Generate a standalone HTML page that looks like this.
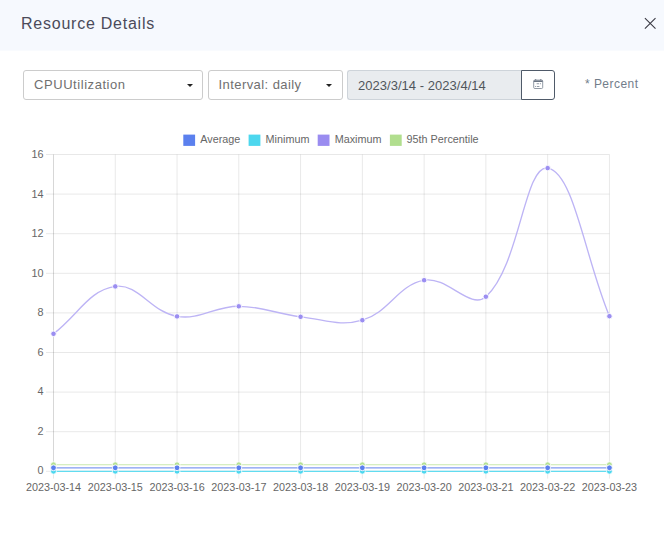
<!DOCTYPE html>
<html><head><meta charset="utf-8"><title>Resource Details</title>
<style>
html,body{margin:0;padding:0;background:#fff;}
body{width:664px;height:537px;position:relative;overflow:hidden;font-family:"Liberation Sans",Arial,sans-serif;}
.hdr{position:absolute;left:0;top:0;width:664px;height:50px;background:#f6f9fe;border-bottom:1px solid #f9fbfe;}
.title{position:absolute;left:21px;top:14px;font-size:16px;line-height:20px;color:#4b4b5a;letter-spacing:0.76px;white-space:nowrap;}
.close{position:absolute;left:640px;top:13px;width:20px;height:20px;}
.sel{position:absolute;top:70px;height:30px;box-sizing:border-box;border:1px solid #ccc;border-radius:3px;background:#fff;color:#707070;font-size:13px;line-height:28px;padding-left:10px;white-space:nowrap;letter-spacing:0.3px;}
.sel i{position:absolute;top:13px;width:0;height:0;border-left:3.5px solid transparent;border-right:3.5px solid transparent;border-top:3.5px solid #222;}
.date{position:absolute;left:347px;top:70px;width:175px;height:30px;box-sizing:border-box;border:1px solid #ced4da;border-right:none;border-radius:3px 0 0 3px;background:#e9ecef;color:#50565c;font-size:13px;line-height:30px;padding-left:10px;white-space:nowrap;letter-spacing:0.03px;}
.btn{position:absolute;left:521px;top:70px;width:34px;height:30px;box-sizing:border-box;border:1px solid #4f5a69;border-radius:0 3px 3px 0;background:#fff;}
.btn svg{position:absolute;left:11px;top:8px;}
.pct{position:absolute;left:585px;top:76px;font-size:12px;line-height:16px;color:#727d8a;white-space:nowrap;letter-spacing:0.45px;}
.chart{position:absolute;left:0;top:120px;}
</style></head><body>
<div class="hdr"><div class="title">Resource Details</div>
<svg class="close" viewBox="0 0 20 20"><path d="M4.9 5.2 L15.5 15.6 M15.5 5.2 L4.9 15.6" stroke="#3a3a44" stroke-width="1.1" fill="none"/></svg></div>
<div class="sel" style="left:23px;width:180px;letter-spacing:0.56px;">CPUUtilization<i style="left:163px"></i></div>
<div class="sel" style="left:208px;width:135px;padding-left:9.5px;letter-spacing:0.43px;">Interval: daily<i style="left:117px"></i></div>
<div class="date">2023/3/14 - 2023/4/14</div>
<div class="btn"><svg width="12" height="12" viewBox="0 0 12 12"><rect x="0.7" y="1.1" width="9" height="8.4" rx="1.1" fill="none" stroke="#7e8895" stroke-width="0.85"/><rect x="0.7" y="1.5" width="9" height="1.5" fill="#6a7583"/><rect x="2.1" y="0" width="1.1" height="1.5" fill="#7e8895"/><rect x="7.2" y="0" width="1.1" height="1.5" fill="#7e8895"/><rect x="3.6" y="4.3" width="2.4" height="0.9" fill="#8a93a0"/><rect x="6.8" y="4.3" width="1.2" height="0.9" fill="#8a93a0"/><rect x="2.1" y="7" width="1.1" height="0.9" fill="#8a93a0"/><rect x="4" y="7" width="2.4" height="0.9" fill="#8a93a0"/></svg></div>
<div class="pct">* Percent</div>
<svg class="chart" width="664" height="417" viewBox="0 120 664 417" font-family="'Liberation Sans', Arial, sans-serif">
<g stroke="rgba(0,0,0,0.09)" stroke-width="1">
<line x1="46" y1="154.50" x2="609.43" y2="154.50"/>
<line x1="46" y1="194.10" x2="609.43" y2="194.10"/>
<line x1="46" y1="233.70" x2="609.43" y2="233.70"/>
<line x1="46" y1="273.30" x2="609.43" y2="273.30"/>
<line x1="46" y1="312.90" x2="609.43" y2="312.90"/>
<line x1="46" y1="352.50" x2="609.43" y2="352.50"/>
<line x1="46" y1="392.10" x2="609.43" y2="392.10"/>
<line x1="46" y1="431.70" x2="609.43" y2="431.70"/>
<line x1="46" y1="471.30" x2="609.43" y2="471.30"/>
<line x1="53.50" y1="154.5" x2="53.50" y2="478.6"/>
<line x1="115.27" y1="154.5" x2="115.27" y2="478.6"/>
<line x1="177.04" y1="154.5" x2="177.04" y2="478.6"/>
<line x1="238.81" y1="154.5" x2="238.81" y2="478.6"/>
<line x1="300.58" y1="154.5" x2="300.58" y2="478.6"/>
<line x1="362.35" y1="154.5" x2="362.35" y2="478.6"/>
<line x1="424.12" y1="154.5" x2="424.12" y2="478.6"/>
<line x1="485.89" y1="154.5" x2="485.89" y2="478.6"/>
<line x1="547.66" y1="154.5" x2="547.66" y2="478.6"/>
<line x1="609.43" y1="154.5" x2="609.43" y2="478.6"/>
<line x1="53.5" y1="154.5" x2="53.5" y2="471.3" stroke="rgba(0,0,0,0.07)"/>
<line x1="53.5" y1="471.3" x2="609.43" y2="471.3"/>
</g>
<g fill="#666" font-size="10.8" text-anchor="end">
<text x="43.4" y="158.30">16</text>
<text x="43.4" y="197.80">14</text>
<text x="43.4" y="237.30">12</text>
<text x="43.4" y="276.80">10</text>
<text x="43.4" y="316.30">8</text>
<text x="43.4" y="355.80">6</text>
<text x="43.4" y="395.30">4</text>
<text x="43.4" y="434.80">2</text>
<text x="43.4" y="474.30">0</text>
</g>
<g fill="#666" font-size="10.8" text-anchor="middle">
<text x="53.50" y="491">2023-03-14</text>
<text x="115.27" y="491">2023-03-15</text>
<text x="177.04" y="491">2023-03-16</text>
<text x="238.81" y="491">2023-03-17</text>
<text x="300.58" y="491">2023-03-18</text>
<text x="362.35" y="491">2023-03-19</text>
<text x="424.12" y="491">2023-03-20</text>
<text x="485.89" y="491">2023-03-21</text>
<text x="547.66" y="491">2023-03-22</text>
<text x="609.43" y="491">2023-03-23</text>
</g>
<g font-size="10.8" fill="#666">
<rect x="183.3" y="134.6" width="11.8" height="11.3" fill="#5b80ee"/>
<text x="200.3" y="143.3">Average</text>
<rect x="248.6" y="134.6" width="11.8" height="11.3" fill="#4dd7ee"/>
<text x="265.6" y="143.3">Minimum</text>
<rect x="317.7" y="134.6" width="11.8" height="11.3" fill="#9a8cf0"/>
<text x="334.7" y="143.3">Maximum</text>
<rect x="389.9" y="134.6" width="11.8" height="11.3" fill="#b1de8e"/>
<text x="406.6" y="143.3">95th Percentile</text>
</g>
<line x1="53.5" y1="464.7" x2="609.43" y2="464.7" stroke="#c8e8ae" stroke-width="1.15"/>
<circle cx="53.50" cy="464.7" r="2.9" fill="#b4e093" stroke="#fff" stroke-width="0.9"/>
<circle cx="115.27" cy="464.7" r="2.9" fill="#b4e093" stroke="#fff" stroke-width="0.9"/>
<circle cx="177.04" cy="464.7" r="2.9" fill="#b4e093" stroke="#fff" stroke-width="0.9"/>
<circle cx="238.81" cy="464.7" r="2.9" fill="#b4e093" stroke="#fff" stroke-width="0.9"/>
<circle cx="300.58" cy="464.7" r="2.9" fill="#b4e093" stroke="#fff" stroke-width="0.9"/>
<circle cx="362.35" cy="464.7" r="2.9" fill="#b4e093" stroke="#fff" stroke-width="0.9"/>
<circle cx="424.12" cy="464.7" r="2.9" fill="#b4e093" stroke="#fff" stroke-width="0.9"/>
<circle cx="485.89" cy="464.7" r="2.9" fill="#b4e093" stroke="#fff" stroke-width="0.9"/>
<circle cx="547.66" cy="464.7" r="2.9" fill="#b4e093" stroke="#fff" stroke-width="0.9"/>
<circle cx="609.43" cy="464.7" r="2.9" fill="#b4e093" stroke="#fff" stroke-width="0.9"/>
<path d="M53.50,333.80 C78.21,314.84 89.01,290.10 115.27,286.40 C138.43,283.14 151.19,312.24 177.04,316.40 C200.60,320.20 214.11,306.22 238.81,306.30 C263.53,306.38 275.71,314.00 300.58,316.80 C325.13,319.56 339.78,326.89 362.35,320.20 C389.20,312.25 397.68,285.23 424.12,280.20 C447.09,275.83 470.60,310.58 485.89,296.70 C520.01,265.74 524.40,164.43 547.66,168.10 C573.82,172.23 584.72,256.96 609.43,316.20" fill="none" stroke="#bdb4f5" stroke-width="1.35"/>
<circle cx="53.50" cy="333.8" r="2.75" fill="#9b8ef1" stroke="#fff" stroke-width="0.9"/>
<circle cx="115.27" cy="286.4" r="2.75" fill="#9b8ef1" stroke="#fff" stroke-width="0.9"/>
<circle cx="177.04" cy="316.4" r="2.75" fill="#9b8ef1" stroke="#fff" stroke-width="0.9"/>
<circle cx="238.81" cy="306.3" r="2.75" fill="#9b8ef1" stroke="#fff" stroke-width="0.9"/>
<circle cx="300.58" cy="316.8" r="2.75" fill="#9b8ef1" stroke="#fff" stroke-width="0.9"/>
<circle cx="362.35" cy="320.2" r="2.75" fill="#9b8ef1" stroke="#fff" stroke-width="0.9"/>
<circle cx="424.12" cy="280.2" r="2.75" fill="#9b8ef1" stroke="#fff" stroke-width="0.9"/>
<circle cx="485.89" cy="296.7" r="2.75" fill="#9b8ef1" stroke="#fff" stroke-width="0.9"/>
<circle cx="547.66" cy="168.1" r="2.75" fill="#9b8ef1" stroke="#fff" stroke-width="0.9"/>
<circle cx="609.43" cy="316.2" r="2.75" fill="#9b8ef1" stroke="#fff" stroke-width="0.9"/>
<line x1="53.5" y1="471.3" x2="609.43" y2="471.3" stroke="#62dcf0" stroke-width="1.15"/>
<circle cx="53.50" cy="471.3" r="2.9" fill="#4dd7ee" stroke="#fff" stroke-width="0.9"/>
<circle cx="115.27" cy="471.3" r="2.9" fill="#4dd7ee" stroke="#fff" stroke-width="0.9"/>
<circle cx="177.04" cy="471.3" r="2.9" fill="#4dd7ee" stroke="#fff" stroke-width="0.9"/>
<circle cx="238.81" cy="471.3" r="2.9" fill="#4dd7ee" stroke="#fff" stroke-width="0.9"/>
<circle cx="300.58" cy="471.3" r="2.9" fill="#4dd7ee" stroke="#fff" stroke-width="0.9"/>
<circle cx="362.35" cy="471.3" r="2.9" fill="#4dd7ee" stroke="#fff" stroke-width="0.9"/>
<circle cx="424.12" cy="471.3" r="2.9" fill="#4dd7ee" stroke="#fff" stroke-width="0.9"/>
<circle cx="485.89" cy="471.3" r="2.9" fill="#4dd7ee" stroke="#fff" stroke-width="0.9"/>
<circle cx="547.66" cy="471.3" r="2.9" fill="#4dd7ee" stroke="#fff" stroke-width="0.9"/>
<circle cx="609.43" cy="471.3" r="2.9" fill="#4dd7ee" stroke="#fff" stroke-width="0.9"/>
<line x1="53.5" y1="467.8" x2="609.43" y2="467.8" stroke="#7f99f2" stroke-width="1.15"/>
<circle cx="53.50" cy="467.8" r="2.9" fill="#5b80ee" stroke="#fff" stroke-width="0.9"/>
<circle cx="115.27" cy="467.8" r="2.9" fill="#5b80ee" stroke="#fff" stroke-width="0.9"/>
<circle cx="177.04" cy="467.8" r="2.9" fill="#5b80ee" stroke="#fff" stroke-width="0.9"/>
<circle cx="238.81" cy="467.8" r="2.9" fill="#5b80ee" stroke="#fff" stroke-width="0.9"/>
<circle cx="300.58" cy="467.8" r="2.9" fill="#5b80ee" stroke="#fff" stroke-width="0.9"/>
<circle cx="362.35" cy="467.8" r="2.9" fill="#5b80ee" stroke="#fff" stroke-width="0.9"/>
<circle cx="424.12" cy="467.8" r="2.9" fill="#5b80ee" stroke="#fff" stroke-width="0.9"/>
<circle cx="485.89" cy="467.8" r="2.9" fill="#5b80ee" stroke="#fff" stroke-width="0.9"/>
<circle cx="547.66" cy="467.8" r="2.9" fill="#5b80ee" stroke="#fff" stroke-width="0.9"/>
<circle cx="609.43" cy="467.8" r="2.9" fill="#5b80ee" stroke="#fff" stroke-width="0.9"/>
</svg>
</body></html>
